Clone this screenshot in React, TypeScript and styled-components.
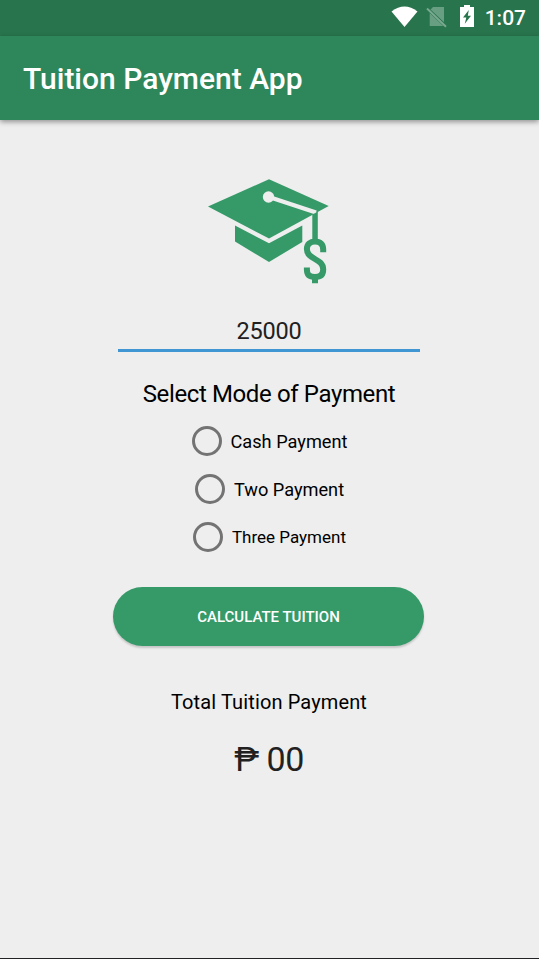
import React from "react";
import styled, { createGlobalStyle } from "styled-components";

const GlobalStyle = createGlobalStyle`
  * { box-sizing: border-box; }
  body { margin: 0; background: #eeeeee; font-family: Roboto, sans-serif; }
`;

const Screen = styled.div`
  display: flex;
  flex-direction: column;
  width: 100%;
  height: 959px;
  background: #eeeeee;
  border-bottom: 1px solid #232026;
  overflow: hidden;
`;

const StatusBar = styled.div`
  display: flex;
  flex: none;
  justify-content: flex-end;
  height: 36px;
  padding-right: 13px;
  background: #28744d;
  color: #fff;
`;

const StatusIcons = styled.svg`
  width: 88px;
  height: 36px;
  margin-right: 6px;
`;

const Clock = styled.span`
  font-size: 21px;
  font-weight: 500;
  line-height: 36px;
`;

const AppBar = styled.header`
  flex: none;
  height: 84px;
  padding: 0 23px;
  background: #2e875a;
  box-shadow: 0 2px 5px rgba(0, 0, 0, 0.38);
`;

const Title = styled.h1`
  margin: 0;
  color: #fff;
  font-size: 30px;
  font-weight: 500;
  line-height: 85px;
`;

const Content = styled.main`
  display: flex;
  flex-direction: column;
  align-items: center;
  padding-right: 1px;
`;

const Logo = styled.svg`
  width: 122px;
  height: 108px;
  margin-top: 58px;
`;

const AmountInput = styled.input`
  width: 302px;
  height: 42px;
  margin-top: 24px;
  padding: 2px 0 0;
  border: 0;
  border-bottom: 3px solid #4096d2;
  outline: 0;
  background: transparent;
  color: #212121;
  font: 400 23.5px/37px Roboto, sans-serif;
  letter-spacing: -0.2px;
  text-align: center;
`;

const Heading = styled.h2`
  margin: 24px 0 0;
  font-size: 24px;
  font-weight: 400;
  line-height: 36px;
  letter-spacing: -0.38px;
`;

const Options = styled.div`
  display: flex;
  flex-direction: column;
  align-items: center;
  margin-top: 5px;
  padding-left: 1px;
`;

const Option = styled.label<{ $size: number }>`
  display: flex;
  align-items: center;
  gap: 9px;
  height: 48px;
  font-size: ${({ $size }) => $size}px;
`;

const Radio = styled.input`
  appearance: none;
  width: 30px;
  height: 30px;
  margin: 0;
  border: 3px solid #737373;
  border-radius: 50%;
`;

const CalculateButton = styled.button`
  width: 311px;
  height: 59px;
  margin: 26px 1px 0 0;
  padding: 1px 0 0;
  border: 0;
  border-radius: 30px;
  background: #359a68;
  box-shadow: 0 2px 2px rgba(0, 0, 0, 0.17);
  color: #fff;
  font: 500 15px/58px Roboto, sans-serif;
`;

const TotalLabel = styled.p`
  margin: 41px 0 0;
  font-size: 20px;
  line-height: 30px;
  letter-spacing: 0.13px;
`;

const Total = styled.output`
  margin-top: 21px;
  color: #212121;
  font-size: 34px;
  line-height: 42px;
  letter-spacing: -0.5px;
`;

const options = [
  { label: "Cash Payment", size: 18.2 },
  { label: "Two Payment", size: 18.2 },
  { label: "Three Payment", size: 17 },
];

export default function App() {
  return (
    <>
      <GlobalStyle />
      <Screen>
        <StatusBar>
          <StatusIcons viewBox="391 0 88 36" fill="#fff">
            <path d="M391.5 11.5Q404.5 1.3 417.5 11.5L404.5 27Z" />
            <path
              d="M433 7H444V22.3L430.5 9.5ZM429.7 13L443 25.7V26H429.7Z"
              opacity="0.3"
            />
            <path d="M427 8.5L446 26.7" stroke="#fff" strokeWidth="1.9" opacity="0.38" />
            <path
              fillRule="evenodd"
              d="M464 5H470V7H474V27H460V7H464ZM468.8 10L463 17.5H466.3L464.8 23.8L471 15.8H467.8Z"
            />
          </StatusIcons>
          <Clock>1:07</Clock>
        </StatusBar>
        <AppBar>
          <Title>Tuition Payment App</Title>
        </AppBar>
        <Content>
          <Logo viewBox="208 178 122 108" fill="#359a68">
            <path d="M208 206.5L269 179.3L328.7 206L269 238.5Z" />
            <path d="M235 225.5L269 243.3L302.3 225.5V242L269 262L235 241.5Z" />
            <path d="M269 197L316 212.5" stroke="#eeeeee" strokeWidth="4.2" fill="none" />
            <circle cx="268.5" cy="197" r="5.7" fill="#eeeeee" />
            <path d="M312.3 214.5L317.8 211.8V240H312.3Z" />
            <path
              d="M323.2 252.2V249.5C323.2 244 320 241.5 315 241.5C310 241.5 306.9 244 306.9 249C306.9 260 323.2 258 323.2 269.5C323.2 275 320 277 315 277C309.8 277 306.9 275 306.9 269.5V267.5M315 277V283.3"
              fill="none"
              stroke="#359a68"
              strokeWidth="6"
            />
          </Logo>
          <AmountInput aria-label="Tuition amount" defaultValue="25000" />
          <Heading>Select Mode of Payment</Heading>
          <Options>
            {options.map(({ label, size }) => (
              <Option key={label} $size={size}>
                <Radio type="radio" name="payment-mode" />
                {label}
              </Option>
            ))}
          </Options>
          <CalculateButton>CALCULATE TUITION</CalculateButton>
          <TotalLabel>Total Tuition Payment</TotalLabel>
          <Total>₱ 00</Total>
        </Content>
      </Screen>
    </>
  );
}
